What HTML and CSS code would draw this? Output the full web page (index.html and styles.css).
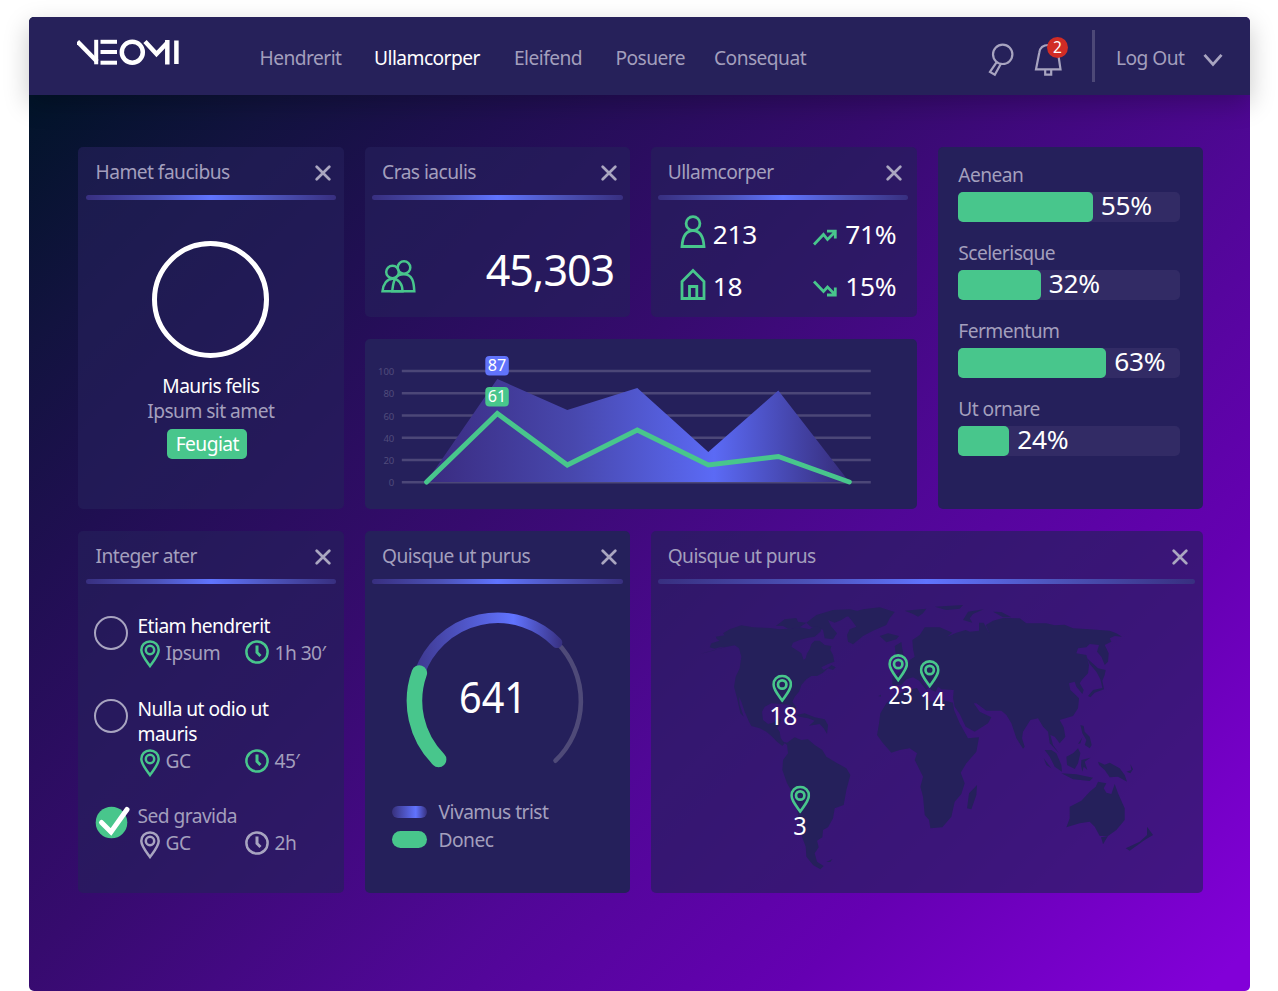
FILE: index.html
```html
<!DOCTYPE html>
<html lang="en">
<head>
<meta charset="utf-8">
<title>Neomi dashboard</title>
<link rel="stylesheet" href="styles.css">
</head>
<body>
<svg width="0" height="0" class="defs" aria-hidden="true">
  <defs>
    <symbol id="pin" viewBox="0 0 20 28"><path d="M10 1.4C5 1.4 1.3 5.2 1.3 10C1.3 15 6 20.500 10 26C14 20.500 18.700 15 18.700 10C18.700 5.200 15 1.400 10 1.400Z" /><circle cx="10" cy="10" r="4.200"/></symbol>
    <symbol id="clock" viewBox="0 0 24 24"><circle cx="12" cy="12" r="10.600"/><path d="M12 5.500V12.500L15.500 16" stroke-width="3"/></symbol>
    <symbol id="close" viewBox="0 0 16 16"><path d="M1.700 1.700L14.300 14.300M14.300 1.700L1.700 14.300" stroke-linecap="round"/></symbol>
    <linearGradient id="area"><stop offset="0" stop-color="#3a2b80"/><stop offset=".35" stop-color="#4848ae"/><stop offset=".68" stop-color="#5b6af5"/><stop offset="1" stop-color="#352b77"/></linearGradient>
  </defs>
</svg>
<div class="window">
  <header class="topbar">
    <svg class="logo" viewBox="77 38 103 28" role="img" aria-label="Neomi">
      <g stroke="#fff" stroke-width="4.500" fill="none">
        <line x1="77.500" y1="41.500" x2="97" y2="61.500"/><line x1="96.200" y1="39.800" x2="96.200" y2="64.300" stroke-width="4"/>
        <line x1="100.500" y1="41.800" x2="117" y2="41.800" stroke-width="4"/><line x1="100.500" y1="52" x2="117" y2="52" stroke-width="4"/><line x1="100.500" y1="62.700" x2="117" y2="62.700" stroke-width="4"/>
        <circle cx="132.300" cy="52.200" r="10.500"/>
        <polyline points="145,41.500 156.500,54 167.500,42.500"/><line x1="167.300" y1="40" x2="167.300" y2="64.500"/>
        <line x1="176.400" y1="40.500" x2="176.400" y2="64"/>
      </g>
    </svg>
    <nav class="nav">
      <a>Hendrerit</a><a class="active">Ullamcorper</a><a>Eleifend</a><a>Posuere</a><a>Consequat</a>
    </nav>
    <div class="tools">
      <svg class="search line" viewBox="987 42 28 35"><circle cx="1002.700" cy="54.300" r="9.700"/><path d="M996.500 62.300L990 72L994.800 74.800L1000.500 64.500"/></svg>
      <div class="bell">
        <svg class="line" viewBox="1034 42 28 35"><path d="M1036 69.300H1060.500L1058 52.500C1057 47.500 1053.500 45 1048.500 45C1043.500 45 1040 47.500 1039.300 52.500Z"/><path d="M1045.200 70V74.700H1051.200V70"/></svg>
        <span class="badge">2</span>
      </div>
      <span class="divider"></span>
      <span class="logout">Log Out</span>
      <svg class="chevron line" viewBox="0 0 20 14"><path d="M1.500 1.800L10 11.500L18.500 1.800"/></svg>
    </div>
  </header>

  <main class="grid">
    <section class="card profile">
      <div class="head"><h2>Hamet faucibus</h2><svg class="x"><use href="#close"/></svg></div><i class="rule"></i>
      <div class="avatar"></div>
      <p class="name">Mauris felis</p>
      <p class="role">Ipsum sit amet</p>
      <span class="tag">Feugiat</span>
    </section>

    <section class="card">
      <div class="head"><h2>Cras iaculis</h2><svg class="x"><use href="#close"/></svg></div><i class="rule"></i>
      <div class="total">
        <svg class="people green" viewBox="380 258 35 35"><circle cx="391.500" cy="271" r="6.300"/><circle cx="403" cy="266.500" r="6.300"/><path d="M381.500 290.300H401.500C401.500 283 397.500 277.800 391.800 277.800C386 277.800 382.200 283 381.500 290.300Z"/><path d="M391.200 290.300H413.300C412.800 281 411.500 273.300 402.800 273.300C398.500 273.300 396.300 274.500 394.500 277C392 281 391.800 286 391.200 290.300Z"/></svg>
        <span class="big">45,303</span>
      </div>
    </section>

    <section class="card third">
      <div class="head"><h2>Ullamcorper</h2><svg class="x"><use href="#close"/></svg></div><i class="rule"></i>
      <div class="stats">
        <div class="stat"><svg class="green" viewBox="0 0 26 34"><circle cx="13" cy="8.500" r="6.900"/><path d="M2 31.500H24C23.500 23 20.500 15.600 13 15.600C5.500 15.600 2.500 23 2 31.500Z"/></svg><b>213</b></div>
        <div class="stat"><svg class="green trend" viewBox="0 0 26 20"><path d="M2 17.500L11.500 7.500L15.500 12.500L23 5M15 4.200H23.300V11.500"/></svg><b>71%</b></div>
        <div class="stat"><svg class="green" viewBox="0 0 26 34"><path d="M2 31.500V14.500L13 3.500L24 14.500V31.500Z"/><path d="M9.500 31V19.500H16.800V31"/></svg><b>18</b></div>
        <div class="stat"><svg class="green trend" viewBox="0 0 26 20"><path d="M2 2.500L11.500 12.500L15.500 8L23 15.500M15 16H23.300V8.500"/></svg><b>15%</b></div>
      </div>
    </section>

    <section class="card solid bars">
      <div class="bar"><label>Aenean</label><div class="track"><i style="width:134.500px"></i><b>55%</b></div></div>
      <div class="bar"><label>Scelerisque</label><div class="track"><i style="width:82.500px"></i><b>32%</b></div></div>
      <div class="bar"><label>Fermentum</label><div class="track"><i style="width:148px"></i><b>63%</b></div></div>
      <div class="bar"><label>Ut ornare</label><div class="track"><i style="width:51px"></i><b>24%</b></div></div>
    </section>

    <section class="card solid chart">
      <svg viewBox="364.700 339 552 170">
        <g stroke="#4c4778" stroke-width="2.500"><path d="M401.500 371H870.500M401.500 393.300H870.500M401.500 415.500H870.500M401.500 437.700H870.500M401.500 460H870.500M401.500 482.200H870.500"/></g>
        <path d="M426 482L497 379L567 410L637 388L708 452L778 390.500L849 482Z" fill="url(#area)"/>
        <g class="axis" text-anchor="end"><text x="394" y="375">100</text><text x="394" y="397">80</text><text x="394" y="419.500">60</text><text x="394" y="441.500">40</text><text x="394" y="463.500">20</text><text x="394" y="486">0</text></g>
        <path d="M426.300 482L497 413.500L567 465L637 430L708 465L778 456.500L849 482" fill="none" stroke="#48c68c" stroke-width="5" stroke-linecap="round"/>
        <rect x="485" y="356" width="23.500" height="19.500" rx="4" fill="#6173fb"/><rect x="485" y="387" width="23.500" height="19.500" rx="4" fill="#48c68c"/>
        <g class="flag"><text x="487.500" y="371" textLength="18.500" lengthAdjust="spacingAndGlyphs">87</text><text x="487.500" y="402" textLength="18.500" lengthAdjust="spacingAndGlyphs">61</text></g>
      </svg>
    </section>

    <section class="card tall">
      <div class="head"><h2>Integer ater</h2><svg class="x"><use href="#close"/></svg></div><i class="rule"></i>
      <ul class="tasks">
        <li><span class="check"></span><div><p>Etiam hendrerit</p><div class="meta"><span><svg class="pin green"><use href="#pin"/></svg>Ipsum</span><span><svg class="clock green"><use href="#clock"/></svg>1h 30′</span></div></div></li>
        <li><span class="check"></span><div><p>Nulla ut odio ut mauris</p><div class="meta"><span><svg class="pin green"><use href="#pin"/></svg>GC</span><span><svg class="clock green"><use href="#clock"/></svg>45′</span></div></div></li>
        <li class="done"><svg class="check" viewBox="0 0 36 36"><circle cx="17.500" cy="18.500" r="15.800" fill="#48c68c"/><path d="M7.500 18.500L17 28L33 5.500" fill="none" stroke="#fff" stroke-width="5" stroke-linecap="round"/></svg><div><p>Sed gravida</p><div class="meta"><span><svg class="pin line"><use href="#pin"/></svg>GC</span><span><svg class="clock line"><use href="#clock"/></svg>2h</span></div></div></li>
      </ul>
    </section>

    <section class="card solid tall">
      <div class="head"><h2>Quisque ut purus</h2><svg class="x"><use href="#close"/></svg></div><i class="rule"></i>
      <svg class="gauge" viewBox="400 600 190 180">
        <defs><linearGradient id="arc" gradientUnits="userSpaceOnUse" x1="419" y1="0" x2="562" y2="0"><stop offset="0" stop-color="#3f3a93"/><stop offset=".66" stop-color="#6173ff"/><stop offset="1" stop-color="#383080"/></linearGradient></defs>
        <g fill="none" stroke-linecap="round">
          <path d="M557 642.700A83 83 0 0 1 555.500 760.700" stroke="#4f4a78" stroke-width="4.600"/>
          <path d="M419.500 673A83 83 0 0 1 557 642.700" stroke="url(#arc)" stroke-width="10.700"/>
          <path d="M438.600 759.400A83 83 0 0 1 419.300 673" stroke="#48c68c" stroke-width="15.600"/>
        </g>
        <text x="459" y="713" textLength="68" lengthAdjust="spacingAndGlyphs">641</text>
      </svg>
      <div class="legend"><i class="sw blue"></i><span>Vivamus trist</span><i class="sw"></i><span>Donec</span></div>
    </section>

    <section class="card third tall map">
      <div class="head"><h2>Quisque ut purus</h2><svg class="x"><use href="#close"/></svg></div><i class="rule"></i>
      <svg class="world" viewBox="651.300 584 552 309">
        <g fill="#25205b" transform="translate(700 590) scale(.33333)">
          <path d="M0 192L40 182L75 170L60 172L45 176L30 172L35 160L60 152L52 148L48 140L75 136L70 130L90 118L125 106L160 112L210 114L240 118L265 116L300 112L330 118L345 108L358 98L368 112L362 125L345 140L325 143L300 150L280 158L275 170L290 180L305 190L312 210L318 205L322 190L330 178L335 162L345 152L360 152L375 165L395 168L392 180L400 195L404 215L385 222L365 232L372 240L388 232L395 225L408 232L400 240L385 235L370 248L352 258L335 258L320 268L305 285L298 305L285 320L278 335L290 352L286 362L272 345L245 342L215 340L195 350L187 365L190 390L205 402L220 398L235 385L245 388L240 405L232 415L240 425L243 445L255 460L248 468L232 455L215 438L200 425L180 415L155 408L148 395L135 365L125 335L118 320L120 345L132 380L122 370L112 325L103 290L108 260L120 235L125 200L118 175L105 166L75 172Z"/>
          <path d="M228 108L255 88L290 84L295 95L320 98L300 112L265 116L250 108ZM320 98L350 75L400 60L450 58L485 65L470 75L440 80L425 90L405 98L385 90L395 110L412 130L400 148L375 145L370 120L355 108L335 112ZM455 90L440 72L490 58L540 52L585 66L570 85L560 105L520 122L490 138L460 163L445 155L442 135L450 118L470 110ZM540 138L565 130L598 138L590 148L560 157ZM615 62L680 56L670 70L655 80L640 72Z"/>
          <path d="M290 375L315 370L345 382L375 388L385 405L382 432L372 415L360 402L328 407L345 392L325 385L300 380ZM250 455L262 458L285 442L305 450L325 448L345 465L368 480L380 500L410 518L440 535L452 555L440 600L432 645L405 655L400 685L385 712L370 720L368 742L352 752L357 772L345 790L352 815L372 828L362 838L340 825L320 800L318 770L305 735L300 700L290 650L285 620L262 580L248 540L250 510L265 490L262 465ZM380 816L398 807L392 816Z"/>
        </g>
        <g fill="#25205b" transform="translate(860 590) scale(.33333)">
          <path d="M62 370L80 340L105 318L135 302L172 294L185 318L215 335L240 328L280 338L283 360L300 400L325 445L358 442L350 485L320 520L303 548L315 580L305 612L285 635L275 680L248 712L212 715L208 690L195 675L190 620L182 590L190 560L165 510L172 490L150 475L120 480L95 488L70 460L52 435L58 400ZM322 655L328 610L352 585L350 615L335 658ZM56 318L64 314L64 320Z"/>
          <path d="M160 178L158 150L180 135L195 112L240 112L278 128L262 140L290 128L318 120L330 125L358 122L358 98L372 98L390 132L378 105L400 92L430 84L480 85L500 100L560 100L585 106L615 104L640 115L690 118L750 122L770 130L787 140L765 138L750 145L755 155L735 165L747 190L745 215L735 225L725 200L712 185L718 165L690 162L680 172L655 175L650 190L680 195L688 225L685 250L668 268L660 280L672 300L668 312L650 290L645 275L628 280L632 300L648 315L658 325L655 355L640 378L600 390L612 412L617 440L600 460L585 440L572 435L580 465L598 490L570 460L565 425L550 410L535 385L512 390L490 425L487 445L495 470L490 476L470 445L455 400L440 375L425 362L380 362L350 340L342 340L360 365L395 382L385 400L345 425L318 410L300 372L285 350L280 325L282 300L245 298L235 290L228 305L215 300L195 275L180 262L205 295L200 300L178 272L160 262L140 268L125 285L98 285L98 262L120 245L145 225L150 210L165 200ZM108 192L105 168L125 156L128 178L132 195L110 200ZM310 90L325 65L372 58L340 72L330 85L338 98ZM225 50L310 45L300 56L260 60ZM400 65L425 66L455 82L430 82Z"/>
          <path d="M685 318L700 300L728 294L722 268L710 245L690 222L682 205L715 235L738 240L735 255L728 272L733 298L705 308L692 322ZM662 405L672 408L675 425L690 440L696 465L690 475L675 465L680 450L668 430ZM655 462L668 442L662 460ZM555 480L575 480L590 490L605 525L607 545L585 530L570 500ZM552 505L575 535L560 525ZM620 500L640 490L655 475L662 490L655 520L645 537L622 525ZM665 510L692 503L675 515L683 540L672 530L668 545L664 528ZM605 550L650 553L700 563L690 573L640 568ZM715 515L735 524L750 518L780 535L795 555L802 575L775 560L750 562L735 540L718 525ZM800 545L815 540L812 522L820 538L812 550Z"/>
          <path d="M630 650L665 632L690 605L708 590L715 575L740 580L732 595L740 608L755 612L765 582L775 610L795 655L795 690L770 720L745 738L720 738L705 710L690 695L660 700L620 712L630 685ZM724 742L745 738L730 763ZM798 775L840 755L862 735L862 710L880 735L855 750L810 782Z"/>
        </g>
        <g class="green">
          <use href="#pin" x="772.500" y="674.500" width="20" height="28"/><use href="#pin" x="888.500" y="654" width="20" height="28"/><use href="#pin" x="920" y="660" width="20" height="28"/><use href="#pin" x="790.500" y="785.500" width="20" height="28"/>
        </g>
        <g class="counts">
          <text x="769.500" y="724.500" textLength="28" lengthAdjust="spacingAndGlyphs">18</text><text x="888.500" y="703.500" textLength="24.500" lengthAdjust="spacingAndGlyphs">23</text><text x="920.500" y="709.500" textLength="24.500" lengthAdjust="spacingAndGlyphs">14</text><text x="793.500" y="834.500" textLength="13.500" lengthAdjust="spacingAndGlyphs">3</text>
        </g>
      </svg>
    </section>
  </main>
</div>
</body>
</html>
```
FILE: styles.css
```css
* { box-sizing: border-box; }
body {
  margin: 0;
  height: 991px;
  padding: 16.5px 28.5px 0 28.5px;
  overflow: hidden;
  background: #fff;
  font-family: "Noto Sans", "Open Sans", sans-serif;
  font-size: 19.2px;
  letter-spacing: -0.55px;
  line-height: 25px;
  color: #a39fbd;
}
.defs { position: absolute; }
h2, p, ul { margin: 0; padding: 0; font: inherit; }
b, i { font-weight: 400; font-style: normal; }
svg { display: block; fill: none; flex: none; }
.line { stroke: #a8a4c0; stroke-width: 2.2; }
.green { stroke: #48c68c; stroke-width: 2.5; }

.window {
  height: 974px;
  border-radius: 5px;
  background: linear-gradient(135deg, #02142a 4%, #12133f 15%, #200f52 26%, #360b6e 43%, #500796 62%, #6500b2 79%, #8200d8 98%);
}
.topbar {
  height: 78.5px;
  padding-left: 48.5px;
  padding-right: 26.5px;
  display: flex;
  align-items: center;
  border-radius: 5px 5px 0 0;
  background: #26215a;
  box-shadow: 0 9px 26px rgba(0, 0, 0, .22);
}
.logo { width: 103px; height: 28px; margin-top: -7px; }
.nav {
  margin: 3px 0 0 79.5px;
  display: grid;
  grid-template-columns: 114.5px 140px 101.5px 98.5px auto;
}
.nav .active { color: #fff; }
.tools { margin-left: auto; display: flex; align-items: center; }
.search { width: 28px; height: 35px; margin: 8px 19px 0 0; }
.bell { position: relative; margin-top: 8px; }
.bell svg { width: 28px; height: 35px; }
.badge {
  position: absolute;
  left: 13px;
  top: -5.5px;
  width: 21px;
  height: 21px;
  border-radius: 50%;
  background: #d12c25;
  color: #fff;
  font-size: 15.5px;
  letter-spacing: 0;
  line-height: 21px;
  text-align: center;
}
.divider { width: 2.5px; height: 52px; margin: 0 21.5px 0 30px; background: #4d4877; }
.logout { width: 87px; margin-top: 3px; }
.chevron { width: 20px; height: 14px; margin-top: 9px; stroke-width: 2.8; }

.grid {
  padding: 52px 45px 0 49.5px;
  display: grid;
  grid-template-columns: repeat(4, 265.6px);
  grid-template-rows: 170px 170px 362px;
  gap: 22px 21px;
}
.card { border-radius: 5px; background: rgba(37, 32, 91, .65); min-width: 0; overflow: hidden; }
.solid { background: #25205b; }
.profile, .bars { grid-row: span 2; }
.chart, .map { grid-column: span 2; }
.head { height: 47.5px; padding: 2px 13px 0 17.5px; display: flex; justify-content: space-between; align-items: center; }
.x { width: 16px; height: 16px; margin-top: 3px; stroke: #aaa6c0; stroke-width: 2.7; }
.rule {
  display: block;
  height: 5px;
  margin: 0 7.5px;
  border-radius: 3px;
  background: linear-gradient(90deg, #382f80, #4c52b8 28%, #6074ff 50%, #4c52b8 75%, #382f80);
}
.third .head { padding-left: 16.5px; padding-right: 15px; }
.third .rule { margin: 0 8.5px 0 6.5px; }

.profile { display: flex; flex-direction: column; align-items: center; }
.profile .head, .profile .rule { align-self: stretch; }
.avatar { width: 117px; height: 117px; margin: 41.5px 0 15px; border: 5.5px solid #fff; border-radius: 50%; }
.name { color: #fff; }
.tag {
  width: 80px;
  height: 30px;
  margin: 6px 7px 0 0;
  border-radius: 5px;
  background: #48c68c;
  color: #fff;
  line-height: 30px;
  text-align: center;
}

.total { padding: 40px 16px 0; display: flex; justify-content: space-between; align-items: center; }
.people { width: 35px; height: 35px; margin-top: 13px; }
.big { font-size: 43px; letter-spacing: -1px; line-height: 60px; color: #fff; }

b { font-size: 26.3px; letter-spacing: -.3px; line-height: 32px; color: #fff; }
.stats { padding: 15.5px 0 0 28.5px; display: grid; grid-template-columns: 132.5px auto; row-gap: 18px; }
.stat { height: 34px; display: flex; align-items: center; gap: 7px; }
.stat svg { width: 26px; height: 34px; stroke-width: 2.8; }
.stat .trend { height: 20px; margin-top: 10px; }
.stat b { margin-top: 4px; }

.bars { padding: 16px 23px 0 20.5px; display: flex; flex-direction: column; gap: 19px; }
.bar { height: 59px; }
.bar label { display: block; height: 29px; line-height: 24px; }
.track { height: 30px; display: flex; gap: 8px; border-radius: 5px; background: #322b65; }
.track i { border-radius: 5px; background: #48c68c; }
.track b { line-height: 26px; }

.chart svg { width: 552px; height: 170px; }
.axis { fill: #514c7b; font-size: 9.5px; letter-spacing: 0; }
.flag { fill: #fff; font-size: 16px; letter-spacing: 0; }

.tasks { padding: 29px 10px 0 16px; list-style: none; }
.tasks li { display: flex; gap: 9.5px; margin-bottom: 30.5px; }
.tasks li + li { margin-bottom: 29px; }
.tasks li > div { flex: 1; }
.check { flex: none; width: 34px; height: 34px; margin-top: 3px; border: 2px solid #a8a4c0; border-radius: 50%; }
svg.check { width: 36px; height: 36px; margin: 1px -2px 0 0; border: 0; border-radius: 0; overflow: visible; }
.tasks p { max-width: 150px; color: #fff; }
.tasks .done p { color: inherit; }
.meta { height: 28px; display: grid; grid-template-columns: 107px auto; }
.meta span { display: flex; align-items: center; gap: 6px; height: 29px; white-space: nowrap; }
.pin { width: 20px; height: 28px; margin: 4px 0 0 2px; }
.clock { width: 24px; height: 24px; }
svg.pin, svg.clock { stroke-width: 2.5; }

.gauge { width: 190px; height: 180px; margin: 16px 0 0 35.5px; }
.gauge text { fill: #fff; font-size: 43.5px; letter-spacing: 0; }
.legend { padding: 19px 0 0 27px; display: grid; grid-template-columns: 35px auto; column-gap: 12px; row-gap: 3px; align-items: center; }
.sw { height: 17px; border-radius: 9px; background: #48c68c; }
.blue { height: 12px; margin-top: 2px; border-radius: 6px; background: linear-gradient(90deg, #37307c, #6173ff 68%, #37307c); }

.world { width: 552px; height: 309px; }
.world .green { stroke-width: 2.7; }
.counts { fill: #fff; font-size: 26px; letter-spacing: 0; }
```
